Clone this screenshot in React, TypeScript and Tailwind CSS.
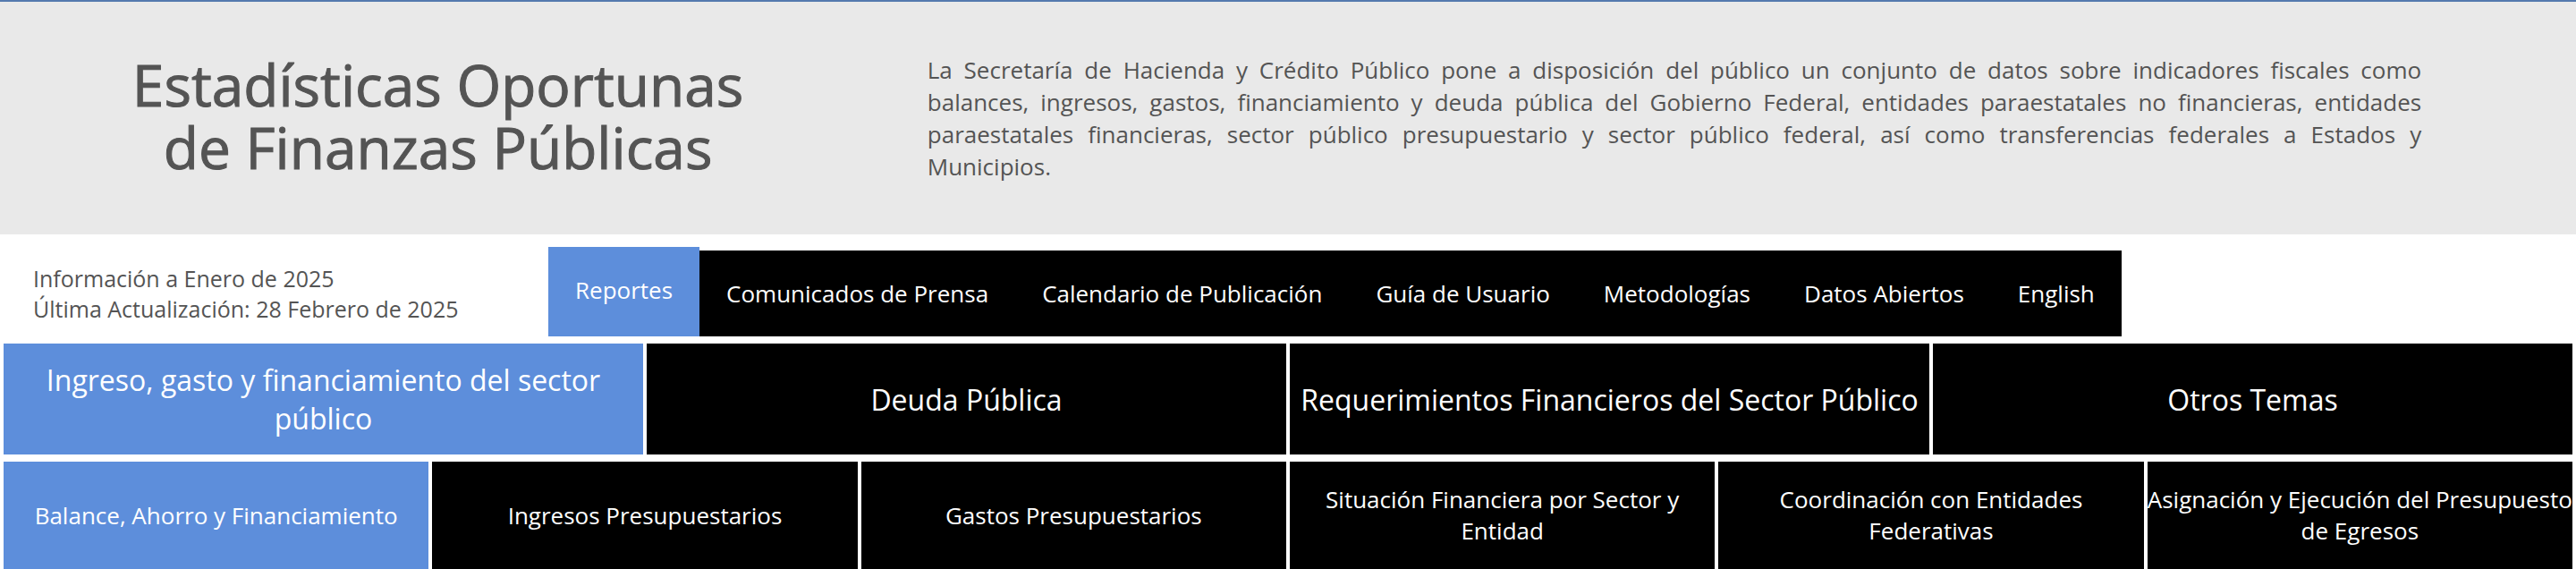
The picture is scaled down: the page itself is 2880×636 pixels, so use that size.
type Item = { label: string; active?: boolean };

const menu: Item[] = [
  { label: "Comunicados de Prensa" },
  { label: "Calendario de Publicación" },
  { label: "Guía de Usuario" },
  { label: "Metodologías" },
  { label: "Datos Abiertos" },
  { label: "English" },
];

const topics: Item[] = [
  { label: "Ingreso, gasto y financiamiento del sector público", active: true },
  { label: "Deuda Pública" },
  { label: "Requerimientos Financieros del Sector Público" },
  { label: "Otros Temas" },
];

const subtopics: Item[] = [
  { label: "Balance, Ahorro y Financiamiento", active: true },
  { label: "Ingresos Presupuestarios" },
  { label: "Gastos Presupuestarios" },
  { label: "Situación Financiera por Sector y Entidad" },
  { label: "Coordinación con Entidades Federativas" },
  { label: "Asignación y Ejecución del Presupuesto de Egresos" },
];

function Tile({ label, active }: Item) {
  return (
    <button
      type="button"
      className={`flex items-center justify-center text-center text-white ${active ? "bg-[#5d8edb]" : "bg-black"}`}
    >
      {label}
    </button>
  );
}

export default function App() {
  return (
    <div className="bg-white font-['Open_Sans',sans-serif] text-[#545454]">
      <header className="flex border-t-2 border-[#547aae] bg-[#e9e9e9] pt-[58px] pb-[58px]">
        <h1 className="w-[34%] shrink-0 text-center text-[64px] leading-[70px] whitespace-pre-line [-webkit-text-stroke:1px_#545454]">
          {"Estadísticas Oportunas\nde Finanzas Públicas"}
        </h1>
        <p className="ml-[2%] w-[58%] text-justify text-[26px] leading-9">
          La Secretaría de Hacienda y Crédito Público pone a disposición del público un conjunto de
          datos sobre indicadores fiscales como balances, ingresos, gastos, financiamiento y deuda
          pública del Gobierno Federal, entidades paraestatales no financieras, entidades
          paraestatales financieras, sector público presupuestario y sector público federal, así
          como transferencias federales a Estados y Municipios.
        </p>
      </header>

      <div className="flex items-end pt-[14px] pb-2">
        <div className="w-[613px] shrink-0 pb-[14px] pl-[37px] text-[25px] leading-[34px]">
          <p>Información a Enero de 2025</p>
          <p>Última Actualización: 28 Febrero de 2025</p>
        </div>
        <nav className="flex items-end text-[26px] leading-9 text-white">
          <a href="#reportes" className="bg-[#5d8edb] px-[30px] pt-[30px] pb-[34px]">
            Reportes
          </a>
          <div className="flex bg-black py-[30px]">
            {menu.map((item) => (
              <a key={item.label} href="#" className="px-[30px] whitespace-nowrap">
                {item.label}
              </a>
            ))}
          </div>
        </nav>
      </div>

      <div className="grid min-h-[124px] grid-cols-4 gap-1 px-1 text-[32px] leading-[43px]">
        {topics.map((item) => (
          <Tile key={item.label} {...item} />
        ))}
      </div>

      <div className="mt-2 grid min-h-[120px] grid-cols-6 gap-1 px-1 text-[26px] leading-[35px]">
        {subtopics.map((item) => (
          <Tile key={item.label} {...item} />
        ))}
      </div>
    </div>
  );
}
